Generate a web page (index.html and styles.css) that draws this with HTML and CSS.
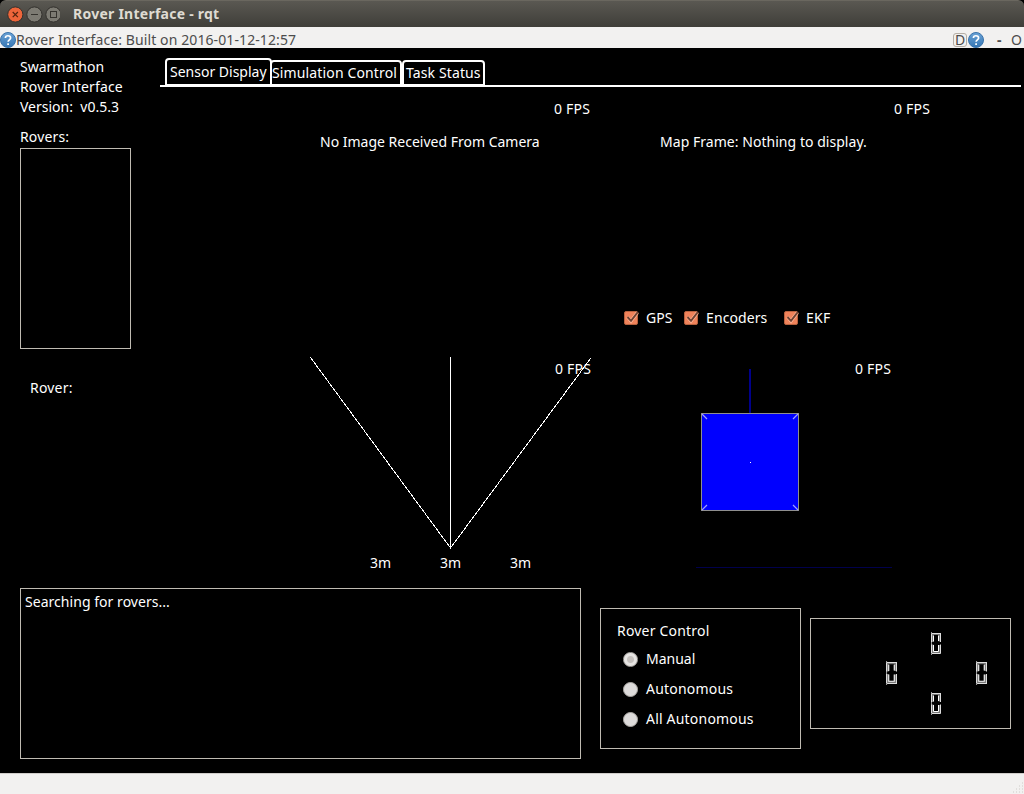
FILE: index.html
```
<!DOCTYPE html>
<html lang="en">
<head>
<meta charset="utf-8">
<title>Rover Interface - rqt</title>
<link rel="stylesheet" href="styles.css">
</head>
<body>
<svg class="defs" width="0" height="0" aria-hidden="true">
  <defs>
    <linearGradient id="helpFill" x1="0" y1="0" x2="0" y2="1"><stop offset="0" stop-color="#6ba3d6"/><stop offset="1" stop-color="#3576b4"/></linearGradient>
    <symbol id="help" viewBox="0 0 16 16">
      <circle cx="8" cy="8" r="7.5" fill="url(#helpFill)" stroke="#3a73ab"/>
      <path d="M5.4 6C5.4 3 10.6 3 10.6 5.9C10.6 7.9 8.1 7.8 8.1 9.8M8.1 11.2V13" fill="none" stroke="#fff" stroke-width="1.7"/>
    </symbol>
    <symbol id="check" viewBox="0 0 16 16">
      <rect x="1.5" y="1.5" width="13" height="13" rx="1.5" fill="#f0835b" stroke="#b9633f" stroke-width="1"/>
      <path d="M4.5 7L8 11L14.5 2.5" fill="none" stroke="#ffb393" stroke-width="3.4"/>
      <path d="M4.5 7L8 10.8L15 1.8" fill="none" stroke="#6e4232" stroke-width="1.9"/>
    </symbol>
    <symbol id="lcd" viewBox="0 0 10 23" preserveAspectRatio="none">
      <path d="M.5 0V23" stroke="#999"/>
      <path d="M1.5 10V2H8.5V9.5M1.5 12.5V20.5H8.5V13" fill="none" stroke="#777" stroke-width="2"/>
      <path d="M.5 1.5V10M1 1.5H10M9.5 1.5V10M.5 12.5V21M9.5 12.5V21.5H1" fill="none" stroke="#ddd"/>
      <path d="M2.5 9.5V3.5M7.5 3.5V9M2.5 13V19.5H7.5V13" fill="none" stroke="#fff"/>
    </symbol>
  </defs>
</svg>
<div class="window">
  <header class="titlebar">
    <svg class="buttons" width="60" height="27" viewBox="0 0 60 27">
      <circle cx="15.3" cy="13.5" r="7.6" fill="#ee653a" stroke="#33312d"/>
      <path d="M12.7 11L17.9 16.2M17.9 11L12.7 16.2" stroke="#54240f" stroke-width="1.2"/>
      <circle cx="34.4" cy="13.5" r="7.6" fill="#7d7b73" stroke="#33312d"/>
      <path d="M31 13.5H38" stroke="#35332e"/>
      <circle cx="53.4" cy="13.5" r="7.6" fill="#7d7b73" stroke="#33312d"/>
      <rect x="50.5" y="10.5" width="6" height="6" fill="none" stroke="#35332e"/>
    </svg>
    <span class="title">Rover Interface - rqt</span>
  </header>
  <div class="dockbar">
    <svg class="help"><use href="#help"/></svg>
    <span class="dock-title">Rover Interface: Built on 2016-01-12-12:57</span>
    <span class="dock-d">D</span>
    <svg class="help"><use href="#help"/></svg>
    <span class="dock-dash">-</span>
    <span class="dock-o">O</span>
  </div>
  <main class="body">
    <div class="upper">
      <aside class="sidebar">
        <span class="label">Swarmathon</span>
        <span class="label l-iface">Rover Interface</span>
        <span class="label">Version:&nbsp; v0.5.3</span>
        <span class="label rovers">Rovers:</span>
        <div class="rover-list"></div>
        <span class="label current">Rover:</span>
      </aside>
      <section class="tabs">
        <nav class="tabbar">
          <span class="tab active"><span>Sensor Display</span></span>
          <span class="tab sim"><span class="t-sim">Simulation Control</span></span>
          <span class="tab task"><span class="t-task">Task Status</span></span>
        </nav>
        <div class="frames">
          <div class="frame camera">
            <span class="fps">0 FPS</span>
            <span class="message">No Image Received From Camera</span>
          </div>
          <div class="frame map">
            <span class="fps">0 FPS</span>
            <span class="message m-map">Map Frame: Nothing to display.</span>
            <div class="checks">
              <label class="check"><svg><use href="#check"/></svg><span>GPS</span></label>
              <label class="check c-enc"><svg><use href="#check"/></svg><span>Encoders</span></label>
              <label class="check c-ekf"><svg><use href="#check"/></svg><span>EKF</span></label>
            </div>
          </div>
          <div class="frame sonar">
            <svg class="rays" width="282" height="192" viewBox="0 0 282 192" shape-rendering="crispEdges">
              <path d="M.5 .5L140.5 191M140.5 0V192M280.5 1.5L140.5 191" fill="none" stroke="#fff"/>
            </svg>
            <span class="fps sonar-fps">0 FPS</span>
            <div class="ranges"><span>3m</span><span>3m</span><span>3m</span></div>
          </div>
          <div class="frame imu">
            <svg width="155" height="212" viewBox="0 0 155 212">
              <path d="M54 12V56" stroke="#00008b" stroke-width="2"/>
              <rect x="5.5" y="56.5" width="97" height="97" fill="#00f" stroke="#8f8f8f"/>
              <path d="M6 57L11 62M102 57L97 62M6 153L11 148M102 153L97 148" stroke="#9f9fff" stroke-width="1.2"/>
              <rect x="54" y="105" width="1" height="1" fill="#fff"/>
            </svg>
            <span class="fps">0 FPS</span>
            <div class="horizon"></div>
          </div>
        </div>
      </section>
    </div>
    <div class="lower">
      <div class="console"><span>Searching for rovers...</span></div>
      <div class="control">
        <span class="heading">Rover Control</span>
        <label class="radio on"><i></i><span>Manual</span></label>
        <label class="radio"><i></i><span>Autonomous</span></label>
        <label class="radio"><i></i><span>All Autonomous</span></label>
      </div>
      <div class="lcds">
        <svg class="up" role="img" aria-label="0"><use href="#lcd"/></svg>
        <svg class="left" role="img" aria-label="0"><use href="#lcd"/></svg>
        <svg class="right" role="img" aria-label="0"><use href="#lcd"/></svg>
        <svg class="down" role="img" aria-label="0"><use href="#lcd"/></svg>
      </div>
    </div>
  </main>
  <footer class="statusbar">
    <svg width="12" height="12" viewBox="0 0 12 12"><path d="M10 1h1M7 4h1M10 4h1M4 7h1M7 7h1M10 7h1M1 10h1M4 10h1M7 10h1M10 10h1" stroke="#cfccc8" stroke-width="1"/></svg>
  </footer>
</div>
</body>
</html>
```
FILE: styles.css
```
* { box-sizing: border-box; }
body { margin: 0; font: 14px/20px "Noto Sans", sans-serif; color: #fff; background: #000; }
.defs { position: absolute; }
svg { display: block; flex: none; }
span { white-space: nowrap; }
.window { width: 1024px; height: 794px; display: flex; flex-direction: column; overflow: hidden; }
.titlebar { height: 27px; display: flex; align-items: center; background: linear-gradient(#5a5852, #3f3e39); border-top: 1px solid #6a675f; border-radius: 6px 6px 0 0; }
.title { margin-left: 13px; font-weight: 700; color: #dfdbd2; letter-spacing: .25px; }
.dockbar { height: 21px; display: flex; align-items: center; padding-top: 5px; background: #f2f1f0; color: #4c4c4c; }
.help { width: 16px; height: 16px; }
.dock-title { width: 937px; letter-spacing: .1px; }
.dock-d { width: 14px; height: 14px; line-height: 12px; text-align: center; border: 1px solid #b5aea5; border-radius: 3px; margin-right: 1px; }
.dock-dash { margin-left: 13px; width: 13px; font-weight: 700; }
.dock-o { margin-left: 1px; }
.body { height: 725px; display: flex; flex-direction: column; }
.upper { height: 540px; display: flex; }
.sidebar { width: 160px; padding: 9px 0 0 20px; display: flex; flex-direction: column; align-items: flex-start; }
.l-iface { letter-spacing: .14px; }
.rovers { margin-top: 10px; letter-spacing: .15px; }
.rover-list { width: 111px; height: 201px; margin-top: 1px; border: 1px solid #bfbbb2; }
.current { margin: 29px 0 0 10px; letter-spacing: .2px; }
.tabs { width: 861px; }
.tabbar { height: 39px; padding: 10px 0 0 5px; display: flex; align-items: flex-end; border-bottom: 2px solid #fff; }
.tab { height: 25px; border: 2px solid #fff; border-bottom-width: 1px; border-radius: 4px 4px 0 0; display: flex; align-items: center; padding-left: 3px; }
.active { width: 107px; height: 27px; }
.sim { width: 132px; margin-left: -2px; padding-left: 0; letter-spacing: .14px; }
.task { width: 83px; padding-left: 2px; letter-spacing: .12px; }
.frames { display: grid; grid-template: 270px 231px / 300px 300px; padding-left: 150px; column-gap: 40px; }
.frame { display: flex; flex-direction: column; align-items: flex-start; }
.fps { letter-spacing: .2px; }
.camera .fps, .map .fps { margin: 12px 0 0 244px; }
.message { margin: 13px 0 0 10px; }
.m-map { letter-spacing: .04px; }
.checks { display: flex; margin: 156px 0 0 -27px; }
.check { display: flex; align-items: center; gap: 7px; width: 60px; }
.check svg { width: 16px; height: 16px; }
.c-enc { width: 100px; letter-spacing: .1px; }
.c-ekf { letter-spacing: .3px; }
.sonar { position: relative; }
.sonar-fps { position: absolute; left: 245px; top: 2px; }
.ranges { display: flex; margin: 4px 0 0 60px; }
.ranges span { width: 70px; }
.imu { display: grid; grid-template: 210px 1px / 159px auto; margin-left: 46px; }
.imu .fps { margin-top: 2px; }
.horizon { width: 196px; height: 1px; background: #00004c; }
.lower { display: flex; padding-left: 20px; }
.console { width: 561px; height: 171px; border: 1px solid #bfbbb2; padding: 3px 4px; letter-spacing: .04px; }
.control { width: 201px; height: 141px; margin: 20px 9px 0 19px; padding: 12px 15px 12px 16px; border: 1px solid #bfbbb2; display: flex; flex-direction: column; letter-spacing: .2px; }
.heading { margin-bottom: 3px; }
.radio { height: 30px; display: flex; align-items: center; gap: 8px; padding-left: 6px; }
.radio i { width: 15px; height: 15px; border-radius: 50%; background: #dddbda; border: 1px solid #aaa7a3; }
.on { letter-spacing: 0; }
.on i { background: radial-gradient(circle, #c4c0bd 0 3px, #e6e4e2 4px); }
.lcds { width: 201px; height: 111px; margin-top: 30px; border: 1px solid #bfbbb2; padding: 13px 0 0 75px; display: grid; grid-template: repeat(3, 30px) / repeat(3, 45px); }
.lcds svg { width: 10px; height: 23px; }
.lcds .left, .lcds .right { width: 11px; height: 24px; margin-top: -1px; }
.up { grid-area: 1 / 2; } .left { grid-area: 2 / 1; } .right { grid-area: 2 / 3; } .down { grid-area: 3 / 2; }
.statusbar { height: 21px; background: #f2f1f0; border-top: 1px solid #d0cdca; display: flex; justify-content: flex-end; align-items: flex-end; }
```
